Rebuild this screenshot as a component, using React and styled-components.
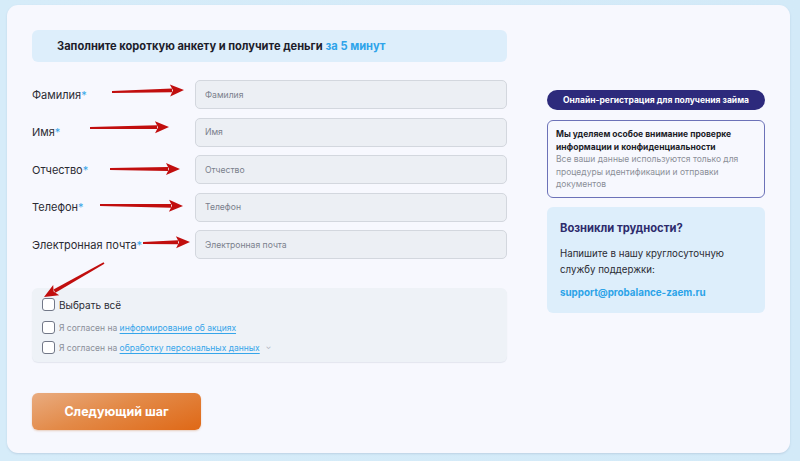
import React from "react";
import styled, { createGlobalStyle } from "styled-components";

const Global = createGlobalStyle`
  html, body { margin: 0; padding: 0; }
  body {
    width: 800px; height: 461px; overflow: hidden;
    background: linear-gradient(90deg, #d6ecf9 0%, #d3eaf8 100%);
    font-family: Inter, "Noto Sans", sans-serif;
  }
  * { box-sizing: border-box; }
`;

const Page = styled.div`
  position: relative;
  width: 800px;
  height: 461px;
  padding: 5px 10px 8px 7px;
`;

const Card = styled.div`
  height: 448px;
  background: #f7f8fe;
  border-radius: 11px;
  box-shadow: 0 1px 2px rgba(120, 140, 170, 0.25);
  padding: 25px 25px 0 25px;
  display: grid;
  grid-template-columns: 475px 218px;
  column-gap: 40px;
  align-items: start;
`;

const Main = styled.div`
  display: flex;
  flex-direction: column;
`;

const Banner = styled.div`
  height: 32px;
  border-radius: 6px;
  background: #ddeefb;
  padding-left: 25px;
  display: flex;
  align-items: center;
  font-size: 11.1px;
  font-weight: 700;
  color: #1d1d2b;
`;

const Accent = styled.span`
  color: #2ea4ea;
  margin-left: 3px;
`;

const Fields = styled.div`
  margin-top: 18px;
  display: flex;
  flex-direction: column;
  gap: 8.5px;
`;

const Row = styled.div`
  display: grid;
  grid-template-columns: 163px 1fr;
  align-items: center;
`;

const Label = styled.label`
  font-size: 11px;
  color: #2b2b33;
`;

const Star = styled.span`
  color: #39a7e8;
`;

const Input = styled.input`
  height: 29px;
  border: 1px solid #d3d7de;
  background: #eceff4;
  border-radius: 5px;
  padding: 0 9px;
  font-family: inherit;
  font-size: 8.6px;
  color: #333;
  outline: none;
  &::placeholder { color: #7a808c; }
`;

const Consent = styled.div`
  margin-top: 29px;
  height: 74px;
  background: #eef2f7;
  border-radius: 6px;
  box-shadow: 0 1px 1px rgba(150, 160, 180, 0.2);
  padding: 10px 10px 0 10px;
  display: flex;
  flex-direction: column;
`;

const CheckRow = styled.div`
  display: flex;
  align-items: center;
  gap: 4px;
  height: 13px;
  margin-top: ${(p) => p.$mt || 0}px;
  font-size: ${(p) => (p.$dark ? "10px" : "8.5px")};
  color: ${(p) => (p.$dark ? "#2b2b33" : "#8a8e97")};
  white-space: nowrap;
`;

const Box = styled.span`
  width: 13px;
  height: 13px;
  border: 1.4px solid #727888;
  border-radius: 3px;
  background: #fff;
  flex: none;
`;

const Text = styled.span``;

const Link = styled.a`
  color: #35a5ea;
  text-decoration: underline;
  text-underline-offset: 1.5px;
`;

const Chevron = styled.span`
  color: #a9adb6;
  font-size: 7px;
  margin-left: 2px;
  transform: translateY(-1px);
`;

const Button = styled.button`
  margin-top: 31px;
  width: 169px;
  height: 37px;
  border: none;
  border-radius: 6px;
  background: linear-gradient(160deg, #e9ac80 0%, #e38a48 45%, #df6816 100%);
  color: #fff;
  font-family: inherit;
  font-size: 12.5px;
  font-weight: 700;
  box-shadow: 0 1px 2px rgba(200, 110, 40, 0.3);
`;

const Side = styled.div`
  margin-top: 60px;
  display: flex;
  flex-direction: column;
`;

const Pill = styled.div`
  height: 20px;
  border-radius: 10px;
  background: #2d2a7c;
  color: #fff;
  font-size: 8.5px;
  font-weight: 700;
  display: flex;
  align-items: center;
  justify-content: center;
`;

const Info = styled.div`
  margin-top: 10px;
  height: 78px;
  border: 1px solid #6c72b8;
  border-radius: 6px;
  padding: 7px 8px 0 8px;
  font-size: 8.5px;
  line-height: 12.5px;
  color: #8b8f98;
`;

const InfoTitle = styled.div`
  color: #1c1c28;
  font-weight: 700;
`;

const Support = styled.div`
  margin-top: 9px;
  height: 106px;
  border-radius: 6px;
  background: #ddeefb;
  padding: 13px 13px 0 13px;
`;

const SupportTitle = styled.div`
  font-size: 11.2px;
  font-weight: 700;
  color: #2d2b6c;
  line-height: 16px;
`;

const SupportText = styled.div`
  margin-top: 10px;
  font-size: 9.7px;
  line-height: 16px;
  color: #2b2b33;
`;

const Email = styled.div`
  margin-top: 9px;
  font-size: 9.8px;
  font-weight: 700;
  color: #2ba3e8;
`;

const Arrows = styled.svg`
  position: absolute;
  left: 0;
  top: 0;
  pointer-events: none;
`;

const fields = ["Фамилия", "Имя", "Отчество", "Телефон", "Электронная почта"];

const arrows = [
  [112, 92, 184, 90],
  [90, 128, 169, 127],
  [110, 169, 180, 169],
  [100, 205, 183, 206],
  [143, 243, 190, 242],
  [104, 263, 44, 297],
];

function Arrow({ x1, y1, x2, y2 }) {
  const dx = x2 - x1;
  const dy = y2 - y1;
  const len = Math.hypot(dx, dy);
  const ux = dx / len;
  const uy = dy / len;
  const hl = 14;
  const hw = 6;
  const bx = x2 - ux * hl;
  const by = y2 - uy * hl;
  const px = -uy;
  const py = ux;
  const s0 = 0.9;
  const s1 = 1.9;
  return (
    <g>
      <path
        d={`M${x1 - px * s0} ${y1 - py * s0} L${bx + ux * 2 - px * s1} ${by + uy * 2 - py * s1} L${bx + ux * 2 + px * s1} ${by + uy * 2 + py * s1} L${x1 + px * s0} ${y1 + py * s0} Z`}
        fill="#c10e0e"
      />
      <path
        d={`M${x2} ${y2} L${bx + px * hw} ${by + py * hw} L${bx + ux * 3} ${by + uy * 3} L${bx - px * hw} ${by - py * hw} Z`}
        fill="#c10e0e"
      />
    </g>
  );
}

export default function App() {
  return (
    <>
      <Global />
      <Page>
        <Card>
          <Main>
            <Banner>
              Заполните короткую анкету и получите деньги<Accent>за 5 минут</Accent>
            </Banner>
            <Fields>
              {fields.map((f) => (
                <Row key={f}>
                  <Label>
                    {f}
                    <Star>*</Star>
                  </Label>
                  <Input placeholder={f} />
                </Row>
              ))}
            </Fields>
            <Consent>
              <CheckRow $dark>
                <Box />
                <Text>Выбрать всё</Text>
              </CheckRow>
              <CheckRow $mt={10}>
                <Box />
                <Text>
                  Я согласен на <Link>информирование об акциях</Link>
                </Text>
              </CheckRow>
              <CheckRow $mt={7}>
                <Box />
                <Text>
                  Я согласен на <Link>обработку персональных данных</Link>
                </Text>
                <Chevron>⌄</Chevron>
              </CheckRow>
            </Consent>
            <Button>Следующий шаг</Button>
          </Main>
          <Side>
            <Pill>Онлайн-регистрация для получения займа</Pill>
            <Info>
              <InfoTitle>
                Мы уделяем особое внимание проверке информации и конфиденциальности
              </InfoTitle>
              Все ваши данные используются только для процедуры идентификации и отправки
              документов
            </Info>
            <Support>
              <SupportTitle>Возникли трудности?</SupportTitle>
              <SupportText>
                Напишите в нашу круглосуточную
                <br />
                службу поддержки:
              </SupportText>
              <Email>support@probalance-zaem.ru</Email>
            </Support>
          </Side>
        </Card>
        <Arrows width="800" height="461" viewBox="0 0 800 461">
          {arrows.map(([x1, y1, x2, y2], i) => (
            <Arrow key={i} x1={x1} y1={y1} x2={x2} y2={y2} />
          ))}
        </Arrows>
      </Page>
    </>
  );
}
